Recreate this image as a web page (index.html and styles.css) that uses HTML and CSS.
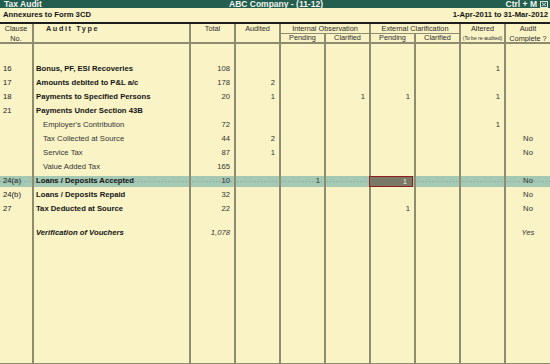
FILE: index.html
```html
<!DOCTYPE html>
<html lang="en">
<head>
    <meta charset="UTF-8">
    <meta name="viewport" content="width=device-width, initial-scale=1.0">
    <title>Tax Audit</title>
    <link rel="stylesheet" href="styles.css">
</head>
<body>
    <div class="window">
        <div class="titlebar">
            <span class="title-left">Tax Audit</span>
            <span class="title-mid">ABC Company - (11-12)</span>
            <span class="title-right">Ctrl + M
                <svg class="close-box" width="8" height="7" viewBox="0 0 8 7">
                    <rect x="0.5" y="0.5" width="7" height="6" fill="none" stroke="#d9e6dd" stroke-width="1"/>
                    <path d="M2 1.8 L6 5.2 M6 1.8 L2 5.2" stroke="#d9e6dd" stroke-width="1"/>
                </svg>
            </span>
        </div>

        <div class="infobar">
            <span>Annexures to Form 3CD</span>
            <span>1-Apr-2011 to 31-Mar-2012</span>
        </div>

        <div class="report">
            <div class="head">
                <div class="h-clause">Clause<br>No.</div>
                <div class="h-type">Audit Type</div>
                <div class="h-single">Total</div>
                <div class="h-single">Audited</div>
                <div class="h-group g-int">Internal Observation</div>
                <div class="h-group g-ext">External Clarification</div>
                <div class="h-altered">Altered<small>(To be re-audited)</small></div>
                <div class="h-complete">Audit<br>Complete ?</div>
                <div class="h-sub c-int1">Pending</div>
                <div class="h-sub c-int2">Clarified</div>
                <div class="h-sub c-ext1">Pending</div>
                <div class="h-sub c-ext2">Clarified</div>
            </div>

            <div class="row gap-top">
                <div></div><div></div><div></div><div></div><div></div><div></div><div></div><div></div><div></div><div></div>
            </div>

            <div class="row">
                <div class="clause">16</div><div class="b">Bonus, PF, ESI Recoveries</div><div class="num">108</div><div class="num"></div>
                <div class="num"></div><div class="num"></div><div class="num"></div><div class="num"></div><div class="num">1</div><div class="mid"></div>
            </div>
            <div class="row">
                <div class="clause">17</div><div class="b">Amounts debited to P&amp;L a/c</div><div class="num">178</div><div class="num">2</div>
                <div class="num"></div><div class="num"></div><div class="num"></div><div class="num"></div><div class="num"></div><div class="mid"></div>
            </div>
            <div class="row">
                <div class="clause">18</div><div class="b">Payments to Specified Persons</div><div class="num">20</div><div class="num">1</div>
                <div class="num"></div><div class="num">1</div><div class="num">1</div><div class="num"></div><div class="num">1</div><div class="mid"></div>
            </div>
            <div class="row">
                <div class="clause">21</div><div class="b">Payments Under Section 43B</div><div class="num"></div><div class="num"></div>
                <div class="num"></div><div class="num"></div><div class="num"></div><div class="num"></div><div class="num"></div><div class="mid"></div>
            </div>
            <div class="row">
                <div class="clause"></div><div class="sub">Employer's Contribution</div><div class="num">72</div><div class="num"></div>
                <div class="num"></div><div class="num"></div><div class="num"></div><div class="num"></div><div class="num">1</div><div class="mid"></div>
            </div>
            <div class="row">
                <div class="clause"></div><div class="sub">Tax Collected at Source</div><div class="num">44</div><div class="num">2</div>
                <div class="num"></div><div class="num"></div><div class="num"></div><div class="num"></div><div class="num"></div><div class="mid">No</div>
            </div>
            <div class="row">
                <div class="clause"></div><div class="sub">Service Tax</div><div class="num">87</div><div class="num">1</div>
                <div class="num"></div><div class="num"></div><div class="num"></div><div class="num"></div><div class="num"></div><div class="mid">No</div>
            </div>
            <div class="row">
                <div class="clause"></div><div class="sub">Value Added Tax</div><div class="num">165</div><div class="num"></div>
                <div class="num"></div><div class="num"></div><div class="num"></div><div class="num"></div><div class="num"></div><div class="mid"></div>
            </div>
            <div class="row hl">
                <div class="clause">24(a)</div><div class="b">Loans / Deposits Accepted</div><div class="num">10</div><div class="num"></div>
                <div class="num">1</div><div class="num"></div><div class="num"><div class="sel">1</div></div><div class="num"></div><div class="num"></div><div class="mid">No</div>
            </div>
            <div class="row">
                <div class="clause">24(b)</div><div class="b">Loans / Deposits Repaid</div><div class="num">32</div><div class="num"></div>
                <div class="num"></div><div class="num"></div><div class="num"></div><div class="num"></div><div class="num"></div><div class="mid">No</div>
            </div>
            <div class="row">
                <div class="clause">27</div><div class="b">Tax Deducted at Source</div><div class="num">22</div><div class="num"></div>
                <div class="num"></div><div class="num"></div><div class="num">1</div><div class="num"></div><div class="num"></div><div class="mid">No</div>
            </div>

            <div class="row gap-mid">
                <div></div><div></div><div></div><div></div><div></div><div></div><div></div><div></div><div></div><div></div>
            </div>

            <div class="row total">
                <div class="clause"></div><div class="b">Verification of Vouchers</div><div class="num">1,078</div><div class="num"></div>
                <div class="num"></div><div class="num"></div><div class="num"></div><div class="num"></div><div class="num"></div><div class="mid">Yes</div>
            </div>

            <div class="row filler">
                <div></div><div></div><div></div><div></div><div></div><div></div><div></div><div></div><div></div><div></div>
            </div>
        </div>
    </div>
</body>
</html>
```

FILE: styles.css
```css
body {
    margin: 0;
    background-color: #f9f3c6;
    font-family: "Liberation Sans", Arial, sans-serif;
    color: #2b2b2b;
}
.window {
    width: 550px;
    height: 364px;
    display: flex;
    flex-direction: column;
    overflow: hidden;
}

/* title bar */
.titlebar {
    height: 8px;
    background-color: #235e4f;
    color: #f1f4ee;
    font-size: 8.5px;
    font-weight: bold;
    line-height: 9px;
    display: grid;
    grid-template-columns: 1fr auto 1fr;
    padding: 0 2px 0 4px;
    overflow: hidden;
}
.title-right {
    justify-self: end;
    display: flex;
    align-items: flex-start;
    gap: 3px;
}
.close-box {
    margin-top: 1px;
}

.infobar {
    height: 14px;
    line-height: 14px;
    font-size: 7.7px;
    font-weight: bold;
    color: #151515;
    display: flex;
    justify-content: space-between;
    padding: 0 2px 0 3px;
    border-bottom: 2px solid #1d1d1d;
}

/* report grid */
.report {
    flex: 1;
    display: flex;
    flex-direction: column;
    border-bottom: 1px solid #8e8c70;
}
.head,
.row {
    display: grid;
    grid-template-columns: 34px 157px repeat(7, 45px) 44px;
}
.head {
    grid-template-rows: 10px 8px;
    border-bottom: 2px solid #8e8c70;
    font-size: 7.3px;
    color: #2d2d2d;
    text-align: center;
}
.head > div {
    border-right: 2px solid #8e8c70;
    white-space: nowrap;
    overflow: hidden;
}
.h-clause,
.h-complete {
    grid-row: 1 / 3;
    line-height: 10px;
}
.h-complete {
    border-right: none !important;
}
.h-type {
    grid-row: 1 / 3;
    text-align: left;
    padding-left: 12px;
    font-weight: bold;
    letter-spacing: 1.6px;
    line-height: 10px;
}
.h-single {
    grid-row: 1 / 3;
    line-height: 10px;
}
.h-group {
    line-height: 9px;
    border-bottom: 1px solid #8e8c70;
}
.g-int { grid-column: 5 / 7; }
.g-ext { grid-column: 7 / 9; }
.h-altered {
    grid-column: 9;
    grid-row: 1 / 3;
    line-height: 10px;
}
.h-altered small {
    display: block;
    font-size: 5px;
    line-height: 8px;
}
.h-sub {
    grid-row: 2;
    line-height: 8px;
}
.c-int1 { grid-column: 5; }
.c-int2 { grid-column: 6; }
.c-ext1 { grid-column: 7; }
.c-ext2 { grid-column: 8; }

.row {
    height: 14px;
    line-height: 14px;
    font-size: 7.7px;
}
.row > div {
    border-right: 2px solid #8e8c70;
    white-space: nowrap;
}
.row > div:last-child {
    border-right: none;
}
.gap-top { height: 18px; }
.gap-mid { height: 10px; }
.filler { flex: 1; height: auto; }

.clause {
    padding-left: 3px;
    color: #222;
}
.b {
    padding-left: 2px;
    font-weight: bold;
    color: #151515;
}
.sub {
    padding-left: 9px;
    color: #333;
}
.num {
    text-align: right;
    padding-right: 4px;
    color: #333;
}
.mid {
    text-align: center;
    color: #333;
}
.total .b,
.total .num,
.total .mid {
    font-style: italic;
}

/* highlighted line */
.hl {
    background:
        repeating-linear-gradient(90deg, #7fa4b6 0 1px, transparent 1px 3px) 0 7px / 100% 1px no-repeat,
        linear-gradient(#a4c8b2, #a4c8b2) 0 2px / 100% 11px no-repeat;
}
.sel {
    height: 11px;
    margin: 2px -3px 0 -2px;
    box-sizing: border-box;
    border: 1px solid #931d1d;
    background-color: #7a7867;
    color: #f3efd6;
    line-height: 9px;
    text-align: right;
    padding-right: 5px;
}
```
